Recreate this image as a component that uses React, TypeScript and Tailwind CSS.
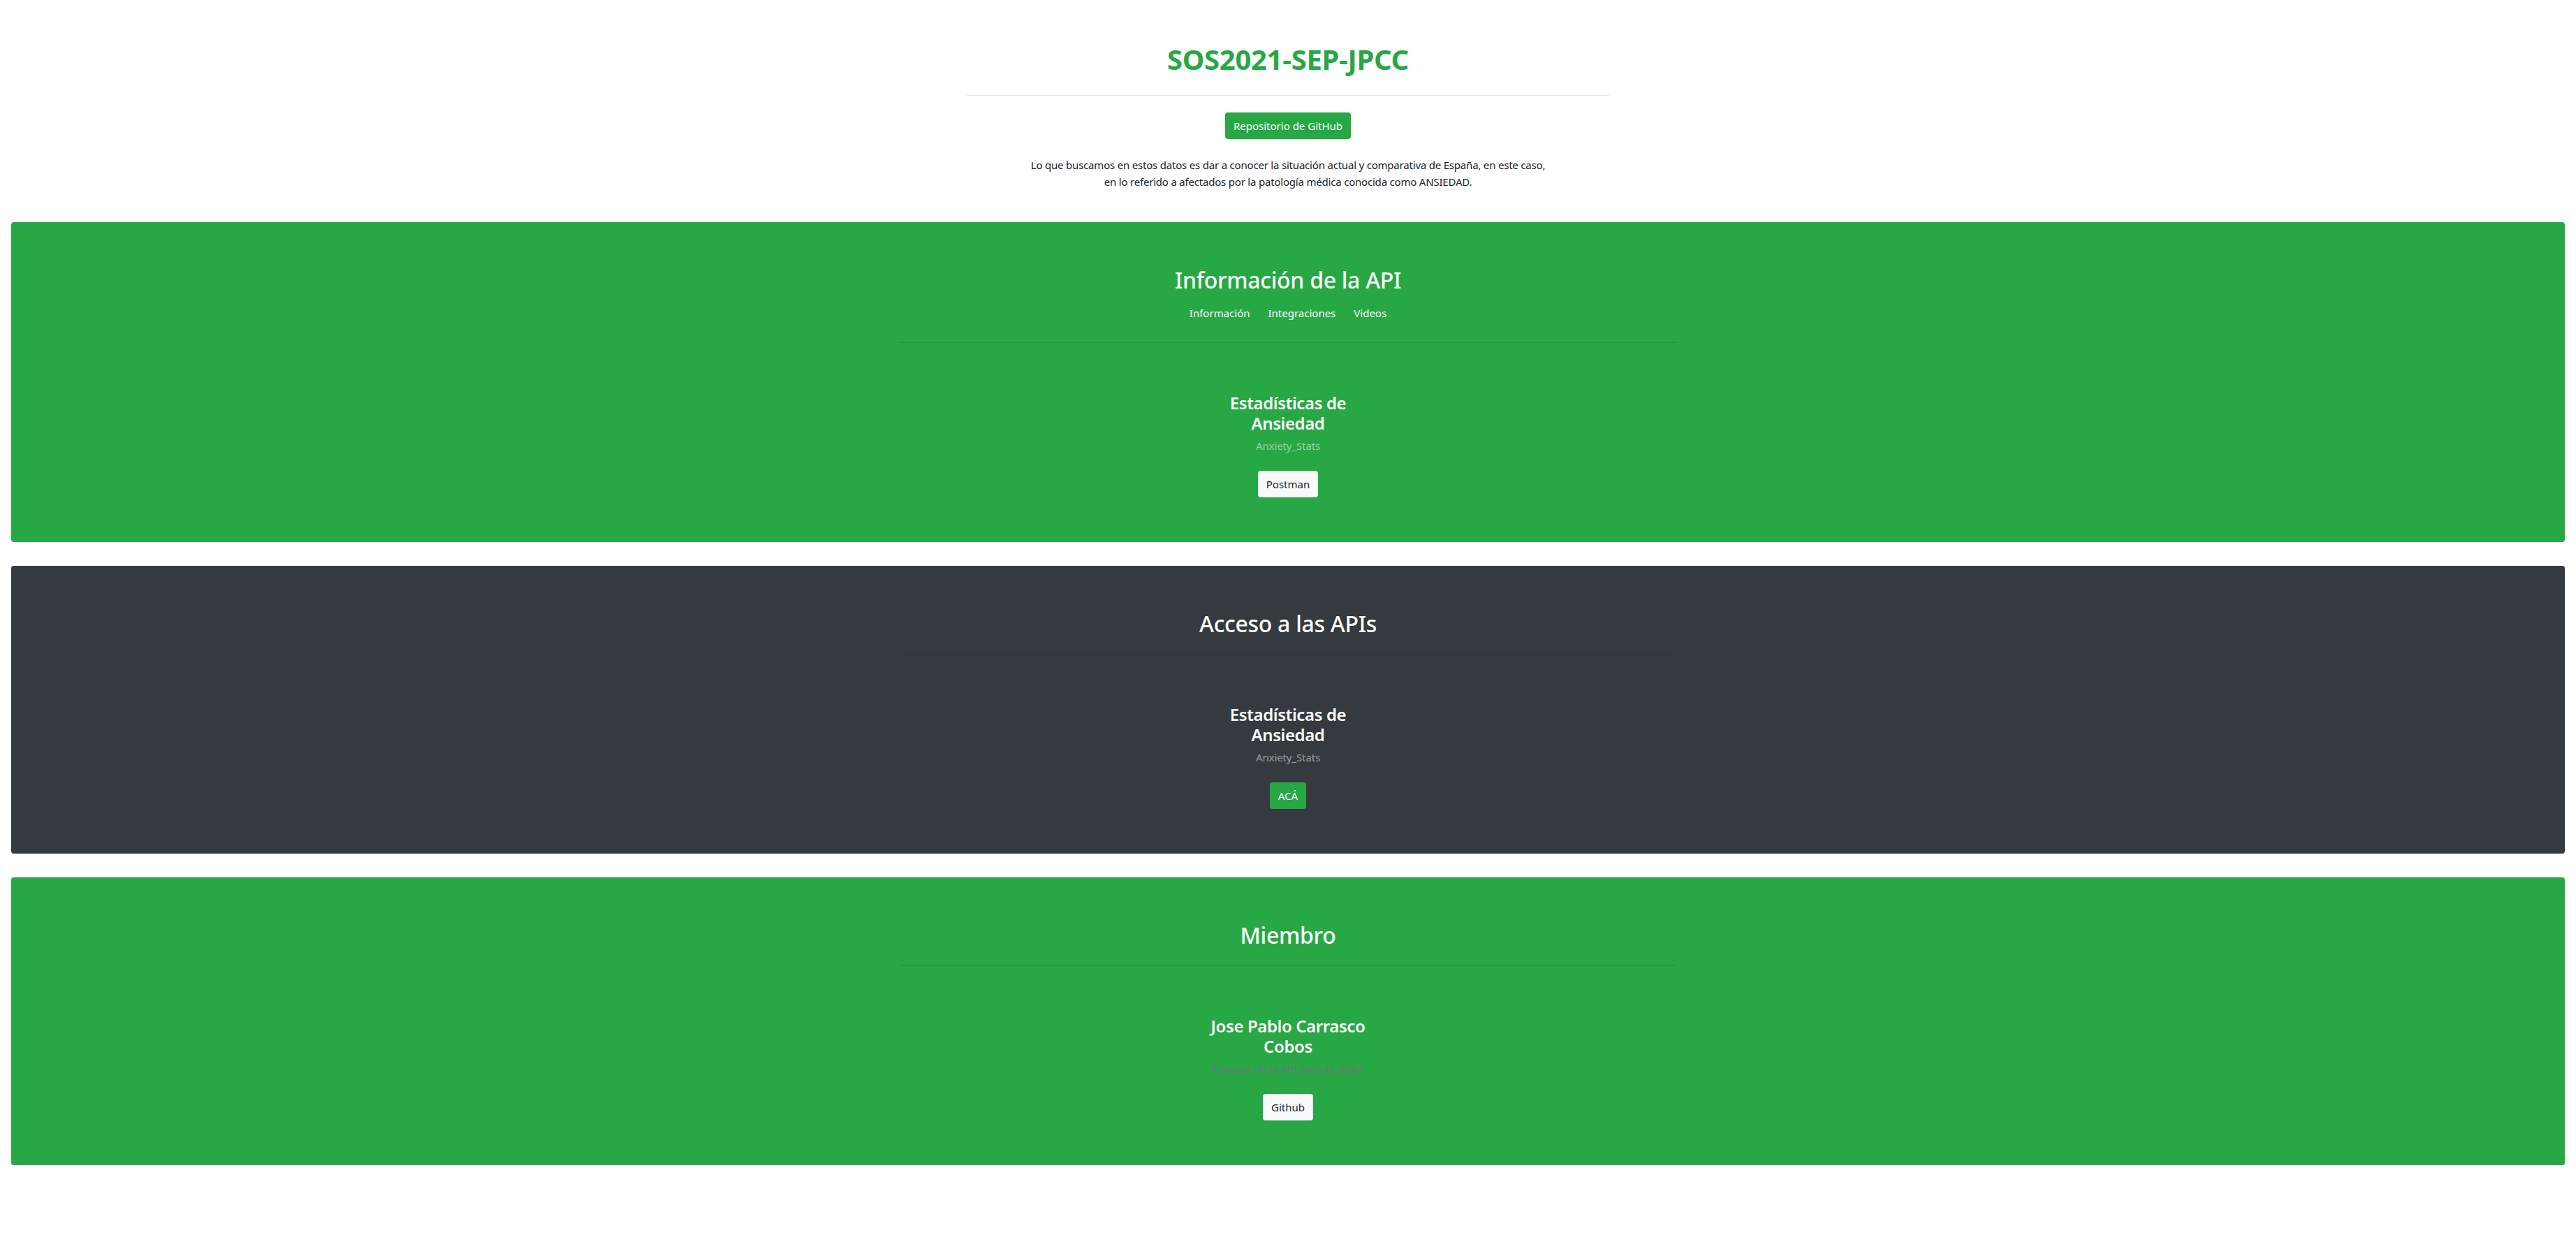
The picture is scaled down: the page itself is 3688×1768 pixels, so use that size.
import React from "react";

const ApiCard = ({
  title,
  subtitle,
  subtitleClass,
  button,
  buttonClass,
}: {
  title: string;
  subtitle: string;
  subtitleClass: string;
  button: string;
  buttonClass: string;
}) => (
  <div className="mt-[72px] flex w-[248px] flex-col items-center text-center">
    <h4 className="text-2xl font-semibold leading-[1.2] tracking-[-0.4px] text-white">
      {title}
    </h4>
    <p className={`mt-[5px] text-[15px] leading-6 tracking-[-0.1px] ${subtitleClass}`}>
      {subtitle}
    </p>
    <a
      href="#"
      className={`mt-6 rounded px-3 py-1.5 text-[15px] leading-[26px] ${buttonClass}`}
    >
      {button}
    </a>
  </div>
);

export default function App() {
  return (
    <div className="min-h-screen bg-white pb-[100px] font-['Segoe_UI','Noto_Sans','Open_Sans',sans-serif] text-[#212529]">
      <header className="flex flex-col items-center pt-[61px]">
        <h1 className="text-[40px] font-bold leading-[1.2] tracking-[-0.3px] text-[#28a745]">
          SOS2021-SEP-JPCC
        </h1>
        <hr className="mt-[27px] w-[920px] border-t border-black/10" />
        <a
          href="#"
          className="mt-6 rounded bg-[#28a745] px-3 py-1.5 text-[15px] leading-[26px] text-white"
        >
          Repositorio de GitHub
        </a>
        <p className="mt-[25px] text-center text-[15px] leading-6 tracking-[-0.2px]">
          Lo que buscamos en estos datos es dar a conocer la situación actual y
          comparativa de España, en este caso,
          <br />
          en lo referido a afectados por la patología médica conocida como
          ANSIEDAD.
        </p>
      </header>

      <main className="mt-[46px] flex flex-col gap-[34px] px-4">
        {/* Información de la API */}
        <section className="rounded bg-[#28a745] px-8 py-16 text-white">
          <div className="mx-auto flex w-[1110px] flex-col items-center">
            <h2 className="text-[32px] font-medium leading-[1.2] tracking-[-0.3px]">
              Información de la API
            </h2>
            <nav className="mt-4 flex gap-[26px] text-[15px] leading-6">
              <a href="#">Información</a>
              <a href="#">Integraciones</a>
              <a href="#">Videos</a>
            </nav>
            <hr className="mt-[30px] w-full border-t border-black/10" />
            <ApiCard
              title="Estadísticas de Ansiedad"
              subtitle="Anxiety_Stats"
              subtitleClass="text-white/50"
              button="Postman"
              buttonClass="bg-[#f8f9fa] text-[#212529]"
            />
          </div>
        </section>

        {/* Acceso a las APIs */}
        <section className="rounded bg-[#343a40] px-8 py-16 text-white">
          <div className="mx-auto flex w-[1110px] flex-col items-center">
            <h2 className="text-[32px] font-medium leading-[1.2] tracking-[-0.3px]">
              Acceso a las APIs
            </h2>
            <hr className="mt-6 w-full border-t border-black/10" />
            <ApiCard
              title="Estadísticas de Ansiedad"
              subtitle="Anxiety_Stats"
              subtitleClass="text-white/50"
              button="ACÁ"
              buttonClass="bg-[#28a745] text-white"
            />
          </div>
        </section>

        {/* Miembro */}
        <section className="rounded bg-[#28a745] px-8 py-16 text-white">
          <div className="mx-auto flex w-[1110px] flex-col items-center">
            <h2 className="text-[32px] font-medium leading-[1.2] tracking-[-0.3px]">
              Miembro
            </h2>
            <hr className="mt-6 w-full border-t border-black/10" />
            <ApiCard
              title="Jose Pablo Carrasco Cobos"
              subtitle="Creador de la API anxiety_stats"
              subtitleClass="text-[#6c757d]"
              button="Github"
              buttonClass="bg-[#f8f9fa] text-[#212529]"
            />
          </div>
        </section>
      </main>
    </div>
  );
}
